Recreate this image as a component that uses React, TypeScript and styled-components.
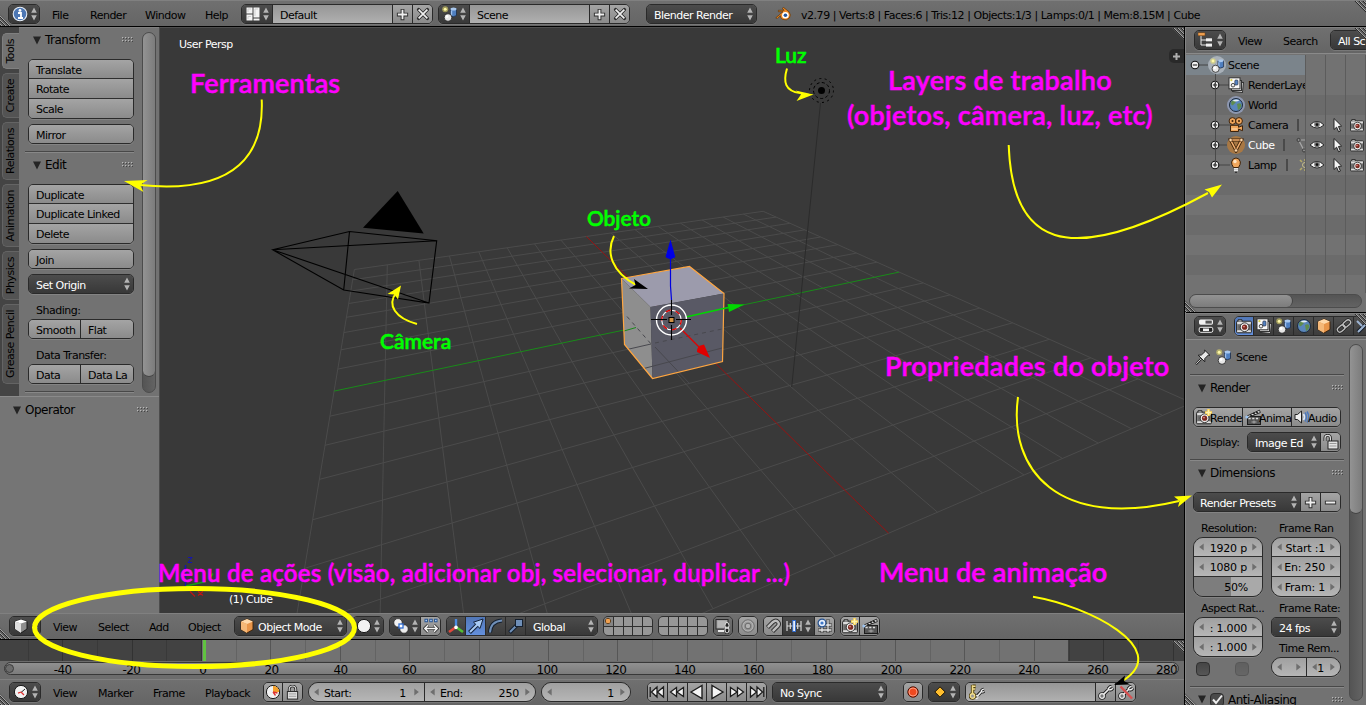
import React from "react";
import styled, { createGlobalStyle, css } from "styled-components";

const GlobalStyle = createGlobalStyle`
  * { box-sizing: border-box; }
  body { margin: 0; background: #393939; overflow: hidden; }
  #root { font-family: "DejaVu Sans", "Liberation Sans", sans-serif; font-size: 11px; color: #000; }
`;

/* ---------- shell ---------- */

const Window = styled.div`
  position: relative;
  width: 1366px;
  height: 705px;
  overflow: hidden;
  display: flex;
  flex-direction: column;
  background: #000;
  line-height: 14px;
  letter-spacing: -0.5px;
`;

const Bar = styled.div<{ $pad?: number; $top?: number }>`
  position: relative;
  flex: none;
  height: 26px;
  padding-left: ${(p) => p.$pad ?? 8}px;
  display: flex;
  align-items: flex-start;
  padding-top: ${(p) => p.$top ?? 3}px;
  overflow: hidden;
  background: linear-gradient(#707070, #656565);
  box-shadow: inset 0 1px #808080;
`;

const Body = styled.div`
  flex: 1;
  min-height: 0;
  display: flex;
  margin-top: 1px;
`;

const MainColumn = styled.div`
  width: 1184px;
  display: flex;
  flex-direction: column;
`;

const SideColumn = styled.div`
  flex: 1;
  margin-left: 1px;
  min-width: 0;
  display: flex;
  flex-direction: column;
  border-left: 1px solid #848484;
  background: #000;
`;

const Stage = styled.div`
  flex: none;
  height: 586px;
  display: flex;
`;

/* ---------- widgets ---------- */

type Tone = "dark" | "light" | "field" | "pill" | "blue" | "tab" | "mid";

const tones: Record<Tone, string> = {
  dark: "linear-gradient(#4c4c4c, #383838)",
  light: "linear-gradient(#a4a4a4, #8b8b8b)",
  field: "linear-gradient(#969696, #b0b0b0)",
  pill: "linear-gradient(#a0a0a0, #b6b6b6)",
  blue: "linear-gradient(#5177b8, #6490dc)",
  tab: "linear-gradient(#505050, #3c3c3c)",
  mid: "linear-gradient(#707070, #606060)",
};

const Group = styled.div<{ $w?: number; $r?: number; $ml?: number; $col?: boolean }>`
  flex: none;
  display: flex;
  flex-direction: ${(p) => (p.$col ? "column" : "row")};
  width: ${(p) => (p.$w ? `${p.$w}px` : "auto")};
  height: ${(p) => (p.$col ? "auto" : "20px")};
  margin-left: ${(p) => p.$ml ?? 0}px;
  border: 1px solid #2a2a2a;
  border-radius: ${(p) => p.$r ?? 5}px;
  overflow: hidden;
  box-shadow: 0 1px rgba(255, 255, 255, 0.12);
`;

const Cell = styled.div<{ $tone: Tone; $w?: number; $pl?: number; $h?: number; $top?: boolean; $center?: boolean }>`
  position: relative;
  display: flex;
  align-items: center;
  flex: ${(p) => (p.$w || p.$h ? "none" : "1")};
  width: ${(p) => (p.$w ? `${p.$w}px` : "auto")};
  height: ${(p) => (p.$h ? `${p.$h}px` : "auto")};
  min-width: 0;
  padding-top: 3px;
  padding-left: ${(p) => p.$pl ?? 0}px;
  justify-content: ${(p) => (p.$center ? "center" : "flex-start")};
  white-space: nowrap;
  overflow: hidden;
  color: ${(p) => (p.$tone === "dark" ? "#fff" : "#000")};
  background: ${(p) => tones[p.$tone]};
  svg {
    margin-top: -3px;
  }
  &:not(:first-child) {
    ${(p) => (p.$top ? css`border-top: 1px solid #2f2f2f;` : css`border-left: 1px solid #2a2a2a;`)}
  }
`;

const Push = styled.span`
  margin-left: auto;
  display: flex;
  align-items: center;
`;

const MenuItem = styled.span<{ $w: number }>`
  flex: none;
  width: ${(p) => p.$w}px;
  padding-top: 5px;
  white-space: nowrap;
`;

const Gap = styled.span<{ $w: number }>`
  flex: none;
  width: ${(p) => p.$w}px;
`;

const Status = styled.span`
  padding: 5px 0 0 10px;
  white-space: nowrap;
  letter-spacing: -0.46px;
`;

const Updown = ({ right = 3 }: { right?: number }) => (
  <Push>
    <svg width="6" height="14" viewBox="0 0 6 14" style={{ marginRight: right }}>
      <path d="M3 0.5 L5.8 5.8 H.2Z M3 13.5 L5.8 8.2 H.2Z" fill="#b4b4b4" />
    </svg>
  </Push>
);

const Arrow = ({ flip }: { flip?: boolean }) => (
  <svg width="5" height="8" viewBox="0 0 5 8" style={{ flex: "none" }}>
    <path d={flip ? "M.3 .5 L4.8 4 L.3 7.5Z" : "M4.7 .5 L.2 4 L4.7 7.5Z"} fill="#6e6e6e" />
  </svg>
);

/* ---------- icons ---------- */

const Svg = styled.svg<{ $ml?: number }>`
  flex: none;
  display: block;
  margin-left: ${(p) => p.$ml ?? 0}px;
`;

const sceneArt = (
  <>
    <path d="M8.5 3 V9.5 Q11 12 14.5 9.5 V3Z" fill="#4f7fc0" stroke="#1d2c45" strokeWidth=".8" />
    <ellipse cx="11.5" cy="3" rx="3" ry="1.5" fill="#a9c8ee" />
    <path d="M9.5 4.5v5" stroke="#9dc0ee" strokeWidth="1.4" />
    <circle cx="6" cy="11.5" r="3.8" fill="#e8e8e8" stroke="#222" strokeWidth=".8" />
    <circle cx="5" cy="10.5" r="1.4" fill="#fff" />
    <circle cx="3.2" cy="3.2" r="3" fill="#e9e06a" opacity=".55" />
    <circle cx="3.2" cy="3.2" r="1.5" fill="#fff9a8" />
  </>
);
const cameraArt = (
  <>
    <rect x=".6" y="3.2" width="14.8" height="11.6" rx="1" fill="#dcdcdc" stroke="#222" />
    <path d="M2 3.400V1.800h4v1.600" fill="#bbb" stroke="#222" />
    <rect x="1.2" y="6.2" width="13.6" height="6" fill="#6c6c6c" />
    <circle cx="8.6" cy="9.2" r="4.400" fill="#eee" stroke="#222" strokeWidth=".9" />
    <circle cx="8.6" cy="9.2" r="2.600" fill="#7a2a20" />
    <circle cx="8" cy="8.600" r=".9" fill="#e88" />
  </>
);
const clapArt = (
  <>
    <rect x="2.5" y="7.5" width="13" height="8" fill="#555" stroke="#1c1c1c" />
    <path d="M2 7 L14.5 1.2 L15.3 3.6 L3 8.5Z" fill="#e6e6e6" stroke="#1c1c1c" strokeWidth=".9" />
    <path d="M5 5.6l2 1.2M8 4.2l2 1.2M11 2.9l2 1.2" stroke="#1c1c1c" strokeWidth="1.4" />
    <path d="M3.5 9.5h11" stroke="#ddd" strokeWidth="1.6" strokeDasharray="2.2 1.5" />
    <path d="M6.5 13h5M9 11.5v3" stroke="#aaa" />
    <circle cx="1.8" cy="8" r="1.5" fill="#9cc3f0" />
  </>
);
const orangeCube = (
  <>
    <path d="M8 1 L14 3.5 V11.5 L8 15 L2 11.5 V3.5Z" fill="#e8954a" stroke="#3a2008" strokeWidth=".9" />
    <path d="M2 3.5 L8 6 L14 3.5 L8 1Z" fill="#ffd9ab" />
    <path d="M2 3.5 L8 6 V15 L2 11.5Z" fill="#f5b878" />
  </>
);
const keyArt = (
  <>
    <path d="M5 11L11 5" stroke="#222" strokeWidth="3.6" />
    <path d="M10 4.8L12 2.6L13.6 2.4M11.4 6.2L13.6 5.6L15 4" fill="none" stroke="#222" strokeWidth="3" />
    <circle cx="4" cy="12" r="2.3" fill="#777" stroke="#222" strokeWidth="3" />
    <path d="M5 11L11 5" stroke="#eee" strokeWidth="1.7" />
    <path d="M10 5L12 2.8L13.6 2.5M11.2 6L13.4 5.5L14.8 4.2" fill="none" stroke="#eee" strokeWidth="1.4" />
    <circle cx="4" cy="12" r="2.3" fill="#777" stroke="#eee" strokeWidth="1.3" />
  </>
);
const worldArt = (
  <>
    <circle cx="8" cy="8" r="6.5" fill="#5a86bb" stroke="#1c2a3c" />
    <path d="M3 5 Q6 2 8 3.5 Q8 6 6 7 Q5 9 3.5 8Z M9 7 Q13 5 13.5 8.5 Q12 12.5 10 13 Q9.5 10 9 7Z" fill="#5f8c4e" />
    <path d="M4.500 3.8 Q8 1.2 11.4 3.4 Q8 5.2 4.500 3.8Z" fill="#e6eef6" />
  </>
);
const layersArt = (
  <>
    <rect x="5" y="5" width="10" height="10" fill="#ccc" stroke="#333" transform="rotate(6 10 10)" />
    <rect x="3.5" y="3.5" width="10" height="10" fill="#ddd" stroke="#333" />
    <rect x="1" y=".8" width="11" height="11" fill="#fafafa" stroke="#333" />
    <circle cx="5" cy="8.2" r="1.8" fill="#eee" stroke="#222" strokeWidth=".8" />
    <rect x="6.8" y="3" width="3.2" height="5" rx="1" fill="#5585c4" stroke="#223" strokeWidth=".6" />
    <circle cx="3.4" cy="3.2" r="1.1" fill="#d8ce4c" />
  </>
);

const art: Record<string, React.ReactNode> = {
  scene: sceneArt,
  camera: cameraArt,
  clap: clapArt,
  cube: orangeCube,
  key: keyArt,
  world: worldArt,
  layers: layersArt,
  cameraNew: (
    <>
      {cameraArt}
      <path d="M12.5 0v7M9 3.5h7" stroke="#ffd24a" strokeWidth="2.6" />
      <path d="M12.5 .8v5.4M9.8 3.5h5.4" stroke="#fff4b0" strokeWidth="1.3" />
    </>
  ),
  info: (
    <>
      <circle cx="8" cy="8" r="6.8" fill="#4d77b4" stroke="#e6edf6" strokeWidth="1.1" />
      <circle cx="8" cy="4.4" r="1.4" fill="#fff" />
      <path d="M6 7h3v4.6M6 12h5" stroke="#fff" strokeWidth="1.8" fill="none" />
    </>
  ),
  layout: (
    <>
      <rect x="1.500" y="1.500" width="6" height="6" fill="#f4f4f4" />
      <rect x="1.500" y="8.500" width="6" height="6" fill="#f4f4f4" />
      <rect x="8.500" y="1.500" width="6" height="10" fill="#f4f4f4" />
      <rect x="8.500" y="12.500" width="6" height="2" fill="#f4f4f4" />
      <path d="M3 13v-2.500h3M3 6V3h3M10 10V3h3" stroke="#cfcfcf" fill="none" />
    </>
  ),
  plus: (
    <>
      <path d="M8 2v12M2 8h12" stroke="#2c2c2c" strokeWidth="4" />
      <path d="M8 3v10M3 8h10" stroke="#efefef" strokeWidth="2" />
    </>
  ),
  minus: (
    <>
      <path d="M2 8h12" stroke="#2c2c2c" strokeWidth="4" />
      <path d="M3 8h10" stroke="#efefef" strokeWidth="2" />
    </>
  ),
  cross: (
    <>
      <path d="M3 3l10 10M13 3L3 13" stroke="#2c2c2c" strokeWidth="4" strokeLinecap="round" />
      <path d="M3 3l10 10M13 3L3 13" stroke="#efefef" strokeWidth="2" />
    </>
  ),
  blender: (
    <>
      <path d="M.8 11.8 L8 5.7 H3.4 L3.4 4.3 H9.2 L7.2 2.4 L8.6 1.5 L14 5.8 Q16.6 9 14.4 12 Q11.5 15 7.8 13.4 Q5.2 12 5.2 9.6 L2.4 12.4Z" fill="#f08a24" stroke="#5a3208" strokeWidth=".7" />
      <circle cx="10.4" cy="9.2" r="3.3" fill="#fff" />
      <circle cx="10.4" cy="9.2" r="1.8" fill="#23569c" />
    </>
  ),
  tree: (
    <>
      <path d="M3 3.5V13h5M3 8h5" stroke="#e9e9e9" fill="none" />
      <rect x="0" y=".8" width="7" height="3" fill="#f0a050" stroke="#6b3c10" strokeWidth=".5" />
      <rect x="8" y="6.3" width="6" height="3" fill="#eee" />
      <rect x="8" y="11.6" width="6" height="3" fill="#eee" />
    </>
  ),
  props: (
    <>
      <rect x="1" y="1.5" width="14" height="5.2" rx="1.6" fill="#f1f1f1" />
      <rect x="7.5" y="2.6" width="6.3" height="3" fill="#555" />
      <rect x="1.2" y="9.3" width="13.6" height="5" rx="1.6" fill="#222" stroke="#f1f1f1" />
      <rect x="5" y="10.5" width="6" height="2.6" fill="#f1f1f1" />
    </>
  ),
  whiteCube: (
    <>
      <path d="M8 1.5 L14 3.5 V11 L8 15 L2 11 V3.5Z" fill="#8e8e8e" stroke="#151515" strokeWidth=".9" />
      <path d="M2 3.5 L8 5.6 L14 3.5 L8 1.5Z" fill="#fff" />
      <path d="M2 3.5 L8 5.6 V15 L2 11Z" fill="#dedede" />
    </>
  ),
  ball: <circle cx="8" cy="8" r="6.6" fill="#f2f2f2" stroke="#1b1b1b" />,
  pivot: (
    <>
      <circle cx="5" cy="4.800" r="4.200" fill="#f2f2f2" stroke="#222" strokeWidth=".7" />
      <circle cx="11" cy="11" r="4.200" fill="#ececec" stroke="#222" strokeWidth=".7" />
      <rect x="6" y="6" width="4" height="4" fill="#fff" stroke="#2f6bd0" strokeWidth="1.3" />
    </>
  ),
  centers: (
    <>
      <path d="M1.5 2.500h3.400M6.300 2.500h3.400M11.100 2.500h3.400" stroke="#24508e" strokeWidth="3.4" />
      <path d="M2.4 2.500h1.6M7.2 2.500h1.6M12 2.500h1.6" stroke="#a9ccf8" strokeWidth="1.6" />
      <path d="M1.500 10.500h13M5 7L1.5 10.500l3.5 3.500M11 7l3.500 3.500-3.500 3.500" stroke="#333" strokeWidth="2.8" fill="none" />
      <path d="M2 10.500h12M5 7.300L1.800 10.500l3.2 3.200M11 7.300l3.200 3.200-3.2 3.200" stroke="#f6f6f6" strokeWidth="1.4" fill="none" />
    </>
  ),
  axes: (
    <>
      <path d="M8 9V1" stroke="#4c8be0" strokeWidth="2.4" />
      <path d="M8 9L1 14" stroke="#e0483c" strokeWidth="2.6" />
      <path d="M8 9l7 5" stroke="#54c034" strokeWidth="2.6" />
      <circle cx="8" cy="9.4" r="1.8" fill="#fff" />
    </>
  ),
  move: (
    <>
      <path d="M1.5 14.5L10 6" stroke="#14233c" strokeWidth="4" />
      <path d="M15 1L5.5 4.2 L12 10.5Z" fill="#a9cbf5" stroke="#14233c" />
      <path d="M2 14L10.5 5.5" stroke="#a9cbf5" strokeWidth="2" />
    </>
  ),
  rotate: (
    <>
      <path d="M2 14.5Q2.5 3.5 14 2.5" stroke="#15202f" strokeWidth="4" fill="none" />
      <path d="M2 14.5Q2.5 3.5 14 2.5" stroke="#6f8fb8" strokeWidth="2" fill="none" />
    </>
  ),
  scale: (
    <>
      <path d="M1.5 14.5L9 7" stroke="#15202f" strokeWidth="4" />
      <path d="M2 14L9 7" stroke="#6f8fb8" strokeWidth="2" />
      <rect x="7.5" y="1.5" width="7" height="7" fill="#6f8fb8" stroke="#15202f" />
    </>
  ),
  lockCam: (
    <>
      <rect x="1" y="1.5" width="12" height="9.5" fill="#a4a4a4" stroke="#2a2a2a" />
      <rect x="2.6" y="3" width="9" height="6.5" fill="#b6b6b6" />
      <path d="M3 13h6" stroke="#e8e8e8" strokeWidth="2" />
      <path d="M12 7v7" stroke="#222" strokeWidth="4.4" strokeLinecap="round" />
      <ellipse cx="12" cy="7.5" rx="2" ry="3" fill="none" stroke="#eee" />
      <ellipse cx="12" cy="12" rx="2" ry="3" fill="none" stroke="#eee" />
    </>
  ),
  prop: (
    <>
      <circle cx="8" cy="8" r="6.2" fill="none" stroke="#6a6a6a" />
      <circle cx="8" cy="8" r="5" fill="none" stroke="#b8b8b8" />
      <circle cx="8" cy="8" r="2.8" fill="#b2b2b2" stroke="#6a6a6a" />
    </>
  ),
  magnet: (
    <>
      <path d="M2.5 9.5 L8 4 Q11 1.5 13 4 Q15 6.5 12 9 L7.5 13.5" stroke="#333" strokeWidth="4.4" fill="none" />
      <path d="M2.8 9.2 L8 4 Q11 1.5 13 4 Q15 6.5 12 9 L7.8 13.2" stroke="#bdbdbd" strokeWidth="2.4" fill="none" />
    </>
  ),
  snapEl: (
    <>
      <path d="M1 3v10M4.3 5v6M11.7 5v6M15 3v10M1 8h14" stroke="#d8d8d8" strokeWidth="1.2" />
      <rect x="6.8" y="2.5" width="2.6" height="11" fill="#fff" stroke="#2f6bd0" />
    </>
  ),
  snapGrid: (
    <>
      <path d="M5 1v14M11 1v14M1 7h14M1 12h14" stroke="#333" strokeWidth="2.8" />
      <path d="M5 1.500v13M11 1.500v13M1.500 7h13M1.500 12h13" stroke="#eaeaea" strokeWidth="1.3" />
      <circle cx="5" cy="5" r="3.9" fill="#e6eefb" stroke="#24508e" strokeWidth="1.2" />
      <circle cx="5" cy="5" r="1.6" fill="#3f78c8" />
    </>
  ),
  clock: (
    <>
      <circle cx="8" cy="8" r="6.6" fill="#f2f2f2" stroke="#1b1b1b" />
      <path d="M8 8.5L12 5" stroke="#222" />
      <path d="M8 8l-3 1.2M8 8l3 3" stroke="#d33" strokeWidth="1.3" />
    </>
  ),
  clockKey: (
    <>
      <circle cx="8" cy="8" r="6.6" fill="#f2f2f2" stroke="#1b1b1b" />
      <path d="M8 8V1.8A6.2 6.2 0 0 1 14.2 8Z" fill="#f4a12c" />
      <path d="M8 8l4.5 1M8 8l2.5 3.5" stroke="#d33" strokeWidth="1.3" />
    </>
  ),
  lock: (
    <>
      <path d="M4.5 7V4.5a3.5 3.5 0 0 1 7 0V7" stroke="#222" strokeWidth="3" fill="none" />
      <path d="M4.5 7V4.5a3.5 3.5 0 0 1 7 0V7" stroke="#ddd" strokeWidth="1.2" fill="none" />
      <rect x="2.5" y="7" width="11" height="8" fill="#e2e2e2" stroke="#222" />
      <path d="M4 9.5h8M4 12h8" stroke="#999" />
    </>
  ),
  unlock: (
    <>
      <path d="M2 7V4a2.6 2.6 0 0 1 5.4 0V7" stroke="#222" strokeWidth="3" fill="none" />
      <path d="M2 7V4a2.6 2.6 0 0 1 5.4 0V7" stroke="#ddd" strokeWidth="1.2" fill="none" />
      <rect x="5" y="7" width="10" height="8" fill="#e2e2e2" stroke="#222" />
      <path d="M6.5 9.5h7M6.5 12h7" stroke="#999" />
    </>
  ),
  first: <path d="M1.2 3v10M2.5 8L8 3v10ZM8.5 8L14.5 3v10Z" fill="#f4f4f4" stroke="#1e1e1e" strokeWidth="1.3" />,
  prev: <path d="M1.5 8L7.5 3.5v9ZM8 8L14.5 3.5v9Z" fill="#f4f4f4" stroke="#1e1e1e" strokeWidth="1.3" />,
  back: <path d="M2 8L13 1.5v13Z" fill="#f4f4f4" stroke="#1e1e1e" strokeWidth="1.4" />,
  play: <path d="M14 8L3 1.5v13Z" fill="#f4f4f4" stroke="#1e1e1e" strokeWidth="1.4" />,
  next: <path d="M14.5 8L8.5 3.5v9ZM8 8L1.5 3.5v9Z" fill="#f4f4f4" stroke="#1e1e1e" strokeWidth="1.3" />,
  last: <path d="M14.8 3v10M13.5 8L8 3v10ZM7.5 8L1.5 3v10Z" fill="#f4f4f4" stroke="#1e1e1e" strokeWidth="1.3" />,
  record: (
    <>
      <circle cx="8" cy="8" r="5.2" fill="#f04a20" stroke="#4a1206" />
      <circle cx="8" cy="8" r="4" fill="none" stroke="#ffb09a" strokeWidth=".8" />
    </>
  ),
  diamond: <path d="M8 2.8L13.2 8L8 13.2L2.8 8Z" fill="#ffbe2e" stroke="#1a1204" />,
  keying: (
    <>
      <path d="M7 13L13 7" stroke="#222" strokeWidth="3.4" />
      <path d="M12 7L13.500 5.500L15 5.200M13 8.500L15.500 7.500" fill="none" stroke="#222" strokeWidth="2.8" />
      <path d="M8 12.500L13 7" stroke="#eee" strokeWidth="1.6" />
      <path d="M12 7L13.500 5.500L15 5.200M13 8.300L15.200 7.500" fill="none" stroke="#eee" strokeWidth="1.2" />
      <circle cx="7.500" cy="13" r="1.6" fill="#777" stroke="#eee" strokeWidth="1.1" />
      <path d="M3.500 1v9M3.500 2.200h3.200M3.500 5h2.800" stroke="#4c3c08" strokeWidth="3.2" />
      <circle cx="3.500" cy="12" r="2.2" fill="#999" stroke="#4c3c08" strokeWidth="3" />
      <path d="M3.500 1.200v9M3.500 2.200h3M3.500 5h2.600" stroke="#f0dc8c" strokeWidth="1.6" />
      <circle cx="3.500" cy="12" r="2.2" fill="#999" stroke="#f0dc8c" strokeWidth="1.4" />
    </>
  ),
  keyOff: (
    <>
      {keyArt}
      <path d="M2.5 2.5L14 14.5" stroke="#d85050" strokeWidth="2.4" />
    </>
  ),
  link: (
    <g transform="rotate(-42 8 8)" fill="none">
      <rect x="0" y="5.500" width="8.500" height="5" rx="2.500" stroke="#222" strokeWidth="2.800" />
      <rect x="7.500" y="5.500" width="8.500" height="5" rx="2.500" stroke="#222" strokeWidth="2.800" />
      <rect x="0" y="5.500" width="8.500" height="5" rx="2.500" stroke="#bdbdbd" strokeWidth="1.400" />
      <rect x="7.500" y="5.500" width="8.500" height="5" rx="2.500" stroke="#bdbdbd" strokeWidth="1.400" />
    </g>
  ),
  wrench: (
    <>
      <path d="M2 14L12 4" stroke="#141c28" strokeWidth="4" />
      <path d="M2 14L12 4M1 3l5 5" stroke="#9db4d2" strokeWidth="2" />
    </>
  ),
  pin: (
    <>
      <path d="M1 15.2L6 10" stroke="#222" strokeWidth="2" />
      <path d="M3.2 6.2L6.4 6 L10 2.6 L9.6 1 L15 6.4 L13.4 6 L9.8 9.6 L9.8 12.8Z" fill="#e8e8e8" stroke="#222" />
      <path d="M1.2 14.8L6 10" stroke="#ddd" strokeWidth=".9" />
    </>
  ),
  speaker: (
    <>
      <path d="M1 5.500h2.500L7.500 2v12L3.500 10.500H1Z" fill="#eee" stroke="#222" />
      <path d="M9.500 5q2 3 0 6" stroke="#dce8fa" strokeWidth="1.600" fill="none" />
      <path d="M11 3.500q3 4.500 0 9M13 2.500q3.600 5.500 0 11" stroke="#4a78c0" strokeWidth="1.400" fill="none" />
    </>
  ),
  movie: (
    <>
      <circle cx="4.5" cy="4" r="3.4" fill="#f0a65c" stroke="#3d220a" />
      <circle cx="11" cy="4" r="3.4" fill="#f0a65c" stroke="#3d220a" />
      <path d="M2.5 8.3h8v2l4-1.6v5l-4-1.6v2.4h-8Z" fill="#f0a65c" stroke="#3d220a" />
      <circle cx="4.5" cy="4" r="1" fill="#3d220a" />
      <circle cx="11" cy="4" r="1" fill="#3d220a" />
      <path d="M3.5 12h6" stroke="#ffe0b8" />
    </>
  ),
  mesh: (
    <>
      <path d="M2.6 3h10.8L8 13.4Z" fill="none" stroke="#3d220a" strokeWidth="3.2" />
      <path d="M2.6 3h10.8L8 13.4Z" fill="none" stroke="#f5b070" strokeWidth="1.5" />
      <circle cx="2.6" cy="3" r="1.7" fill="#ffd9ab" stroke="#3d220a" strokeWidth=".6" />
      <circle cx="13.4" cy="3" r="1.7" fill="#ffd9ab" stroke="#3d220a" strokeWidth=".6" />
      <circle cx="8" cy="13.4" r="1.7" fill="#ffd9ab" stroke="#3d220a" strokeWidth=".6" />
    </>
  ),
  meshData: (
    <>
      <path d="M2.6 3h10.8L8 13.4Z" fill="none" stroke="#a8a8a8" strokeWidth="1.2" />
      <circle cx="2.6" cy="3" r="1.6" fill="#8a8a8a" stroke="#3c3c3c" />
      <circle cx="8" cy="13.4" r="1.6" fill="#8a8a8a" stroke="#3c3c3c" />
    </>
  ),
  lampData: (
    <>
      <circle cx="8" cy="8" r="2.5" fill="none" stroke="#c8bf88" />
      <path d="M3 3l2 2M3 13l2-2M8 2v2M8 14v-2" stroke="#b5ab68" strokeWidth="1.6" />
    </>
  ),
  lamp: (
    <>
      <path d="M5.5 10.5Q3.4 7.5 3.6 5 Q4.5 1 8 1 Q11.5 1 12.4 5 Q12.6 7.5 10.5 10.5Z" fill="#f0a65c" stroke="#3d220a" />
      <circle cx="7" cy="4.5" r="1.7" fill="#ffe6c6" />
      <path d="M6 11.8h4M6 13.6h4" stroke="#e6e6e6" strokeWidth="1.5" />
      <path d="M7 15.3h2" stroke="#333" strokeWidth="1.2" />
    </>
  ),
  eye: (
    <>
      <path d="M1 8Q8 .8 15 8Q8 14 1 8Z" fill="#f4f4f4" stroke="#2c2c2c" />
      <circle cx="8" cy="7.600" r="2.800" fill="#777" />
      <circle cx="8" cy="7.600" r="1.300" fill="#111" />
    </>
  ),
  cursor: <path d="M5 1.5V12.5L7.6 10.2L9.6 14.8L11.4 14L9.5 9.5L12.6 9Z" fill="#f4f4f4" stroke="#222" />,
};

const Icon = ({ n, s = 16, ml }: { n: string; s?: number; ml?: number }) => (
  <Svg $ml={ml} width={s} height={s} viewBox="0 0 16 16">
    {art[n]}
  </Svg>
);

const Grip = styled.span<{ $x: number; $y: number; $top?: boolean }>`
  position: absolute;
  z-index: 3;
  left: ${(p) => p.$x}px;
  top: ${(p) => p.$y}px;
  width: 12px;
  height: 12px;
  clip-path: ${(p) => (p.$top ? "polygon(0 0, 100% 0, 100% 100%)" : "polygon(0 0, 100% 100%, 0 100%)")};
  background: repeating-linear-gradient(45deg, #2a2a2a 0 1.2px, #a0a0a0 1.2px 2.1px, #606060 2.1px 2.83px);
`;

const EditorButton = ({ n }: { n: string }) => (
  <Group $w={32}>
    <Cell $tone="dark" $pl={3}>
      <Icon n={n} />
      <Updown right={2} />
    </Cell>
  </Group>
);

/* ---------- tool shelf ---------- */

const Shelf = styled.div`
  width: 160px;
  display: flex;
  flex-direction: column;
  background: #727272;
  border-right: 1px solid #4c4c4c;
  box-shadow: inset 0 1px #808080;
`;

const ShelfTop = styled.div`
  height: 369px;
  display: flex;
`;

const TabStrip = styled.div`
  width: 19px;
  padding: 6px 0 0 2px;
  display: flex;
  flex-direction: column;
  gap: 4px;
  background: #444;
`;

const Tab = styled.div<{ $h: number; $on?: boolean }>`
  flex: none;
  height: ${(p) => p.$h}px;
  border-radius: 5px 0 0 5px;
  border: 1px solid ${(p) => (p.$on ? "#808080" : "#646464")};
  border-right: 0;
  background: ${(p) => (p.$on ? "#727272" : "#535353")};
  display: flex;
  align-items: center;
  justify-content: center;
  span {
    writing-mode: vertical-rl;
    transform: rotate(180deg);
    white-space: nowrap;
    line-height: 16px;
  }
`;

const ShelfBody = styled.div`
  width: 119px;
  padding: 4px 4px 0 6px;
`;

const PanelTitle = styled.div<{ $pl?: number; $h?: number }>`
  display: flex;
  align-items: center;
  height: ${(p) => p.$h ?? 18}px;
  padding-left: ${(p) => p.$pl ?? 8}px;
  font-size: 12px;
  gap: 4px;
  white-space: nowrap;
`;

const Rule = styled.div<{ $mt?: number }>`
  height: 2px;
  margin-top: ${(p) => p.$mt ?? 6}px;
  border-top: 1px solid #484848;
  border-bottom: 1px solid #888;
`;

const Caption = styled.div<{ $mt?: number; $w?: number }>`
  height: 15px;
  line-height: 16px;
  width: ${(p) => (p.$w ? `${p.$w}px` : "auto")};
  margin-top: ${(p) => p.$mt ?? 0}px;
  padding-left: 8px;
  white-space: nowrap;
`;

const Stack = styled.div<{ $mt?: number; $pl?: number }>`
  margin-top: ${(p) => p.$mt ?? 0}px;
  padding-left: ${(p) => p.$pl ?? 3}px;
`;

const Triangle = () => (
  <svg width="8" height="9" viewBox="0 0 8 9">
    <path d="M0 .5H8L4 8.500Z" fill="#242424" />
  </svg>
);

const Dots = () => (
  <Push>
    <svg width="12" height="6" viewBox="0 0 12 6">
      {[0, 3, 6, 9].map((x) =>
        [0, 3].map((y) => (
          <g key={`${x}-${y}`}>
            <rect x={x} y={y} width="1.2" height="1.2" fill="#b8b8b8" />
            <rect x={x + 1} y={y + 1} width="1" height="1" fill="#444" />
          </g>
        ))
      )}
    </svg>
  </Push>
);

const VScroll = styled.div<{ $h: number; $thumb: number }>`
  flex: none;
  width: 14px;
  height: ${(p) => p.$h}px;
  border-radius: 7px;
  border: 1px solid #4c4c4c;
  background: linear-gradient(90deg, #545454, #636363);
  &::before {
    content: "";
    display: block;
    height: ${(p) => p.$thumb}px;
    border-radius: 6px;
    border-bottom: 1px solid #454545;
    background: linear-gradient(90deg, #939393, #7c7c7c);
  }
`;

const ButtonStack = ({ items }: { items: string[] }) => (
  <Group $w={106} $col>
    {items.map((t, i) => (
      <Cell key={t} $tone="light" $top $pl={7} $h={i ? 20 : 18}>
        {t}
      </Cell>
    ))}
  </Group>
);

const OperatorPanel = styled.div`
  flex: 1;
  padding-right: 10px;
  border-top: 1px solid #8a8a8a;
  background: #757575;
`;

const ToolShelf = () => (
  <Shelf>
    <ShelfTop>
      <TabStrip>
        <Tab $h={36} $on><span>Tools</span></Tab>
        <Tab $h={45}><span>Create</span></Tab>
        <Tab $h={58}><span>Relations</span></Tab>
        <Tab $h={63}><span>Animation</span></Tab>
        <Tab $h={49}><span>Physics</span></Tab>
        <Tab $h={80}><span>Grease Pencil</span></Tab>
      </TabStrip>
      <ShelfBody>
        <PanelTitle><Triangle />Transform<Dots /></PanelTitle>
        <Stack $mt={10}><ButtonStack items={["Translate", "Rotate", "Scale"]} /></Stack>
        <Stack $mt={5}><ButtonStack items={["Mirror"]} /></Stack>
        <Rule $mt={7} />
        <PanelTitle $h={24}><Triangle />Edit<Dots /></PanelTitle>
        <Stack $mt={7}><ButtonStack items={["Duplicate", "Duplicate Linked", "Delete"]} /></Stack>
        <Stack $mt={5}><ButtonStack items={["Join"]} /></Stack>
        <Stack $mt={5}>
          <Group $w={106}>
            <Cell $tone="dark" $pl={7}>Set Origin<Updown /></Cell>
          </Group>
        </Stack>
        <Stack><Caption $mt={9}>Shading:</Caption></Stack>
        <Stack $mt={1}>
          <Group $w={106}>
            <Cell $tone="light" $w={51} $pl={7}>Smooth</Cell>
            <Cell $tone="light" $pl={7}>Flat</Cell>
          </Group>
        </Stack>
        <Stack><Caption $mt={9}>Data Transfer:</Caption></Stack>
        <Stack $mt={1}>
          <Group $w={106}>
            <Cell $tone="light" $w={51} $pl={7}>Data</Cell>
            <Cell $tone="light" $pl={7}>Data La</Cell>
          </Group>
        </Stack>
        <Rule $mt={7} />
      </ShelfBody>
      <Stack $mt={5} $pl={4}><VScroll $h={361} $thumb={343} /></Stack>
    </ShelfTop>
    <OperatorPanel>
      <PanelTitle $h={26} $pl={13}><Triangle />Operator<Dots /></PanelTitle>
    </OperatorPanel>
  </Shelf>
);

/* ---------- 3D viewport ---------- */

const Viewport = styled.div`
  position: relative;
  flex: 1;
  background: #393939;
  box-shadow: inset 0 1px #4e4e4e;
  color: #fff;
`;

const Canvas = styled.svg`
  position: absolute;
  inset: 0;
`;

const ViewLabel = styled.span<{ $x: number; $y: number }>`
  position: absolute;
  left: ${(p) => p.$x}px;
  top: ${(p) => p.$y}px;
`;

const RegionToggle = styled.span`
  position: absolute;
  right: 0;
  top: 22px;
  width: 15px;
  height: 14px;
  border-radius: 5px 0 0 5px;
  background: #292929;
  display: flex;
  align-items: center;
  justify-content: center;
`;

const project = (u: number, v: number) => {
  const w = 1 - 0.437 * u + 0.1945 * v;
  return [(671.5 - 171.2 * u + 402.4 * v) / w, (320 - 19.8 * u + 5 * v) / w];
};

const seg = (a: number[], b: number[]) =>
  `M${a[0].toFixed(1)} ${a[1].toFixed(1)}L${b[0].toFixed(1)} ${b[1].toFixed(1)}`;

const steps = Array.from({ length: 17 }, (_, i) => (i - 8) / 8).filter((t) => t !== 0);
const floor = steps
  .map((t) => seg(project(t, -1), project(t, 1)) + seg(project(-1, t), project(1, t)))
  .join("");

const Scene3D = () => (
  <Canvas width="1024" height="586" viewBox="160 27 1024 586" fill="none">
    <path d={floor} stroke="#4b4b4b" strokeWidth="1" />
    <path d={seg(project(0, -1), project(0, 1))} stroke="#198a19" />
    <path d={seg(project(-1, 0), project(1, 0))} stroke="#981212" />
    <path d="M820.5 103L791.7 387" stroke="#2b2b2b" />
    <g stroke="#000" strokeDasharray="3 2.4">
      <circle cx="821.5" cy="90.5" r="8" />
      <circle cx="821.5" cy="90.5" r="12" strokeDasharray="2 3.4" />
    </g>
    <circle cx="821.5" cy="90.5" r="3.5" fill="#000" />

    <path d="M397.7 191L363 227.7L423.7 233.5Z" fill="#000" />
    <path
      d="M272.5 249.7L349.5 231.5L436.7 240.7L429 303L343.7 290ZM349.5 231.5L343.7 290M272.5 249.7L436.7 240.7M272.5 249.7L429 303"
      stroke="#000"
      strokeWidth="1.1"
    />

    <path d="M621.5 278.5L689.5 266.5L724 293.5L650.5 307Z" fill="#9c9bac" />
    <path d="M621.5 278.5L650.5 307L652.5 378.5L624.5 344.5Z" fill="#8e8e8e" />
    <path d="M650.5 307L724 293.5L722.5 361.5L652.5 378.5Z" fill="#595965" />
    <path d="M627 349.500L651 344M642 369L722 348M655 347L690 384" stroke="#48484e" />
    <path d="M627 316.500L652 345M655 343L722 329" stroke="#48484e" strokeDasharray="4 4" />
    <path d="M624 331L636 327.500" stroke="#198a19" />
    <path d="M621.5 278.5L689.5 266.5L724 293.5L722.5 361.5L652.5 378.5L624.5 344.5Z" stroke="#ffa640" strokeWidth="1.2" />

    <path d="M670.5 258V286L671.5 300" stroke="#0000e0" strokeWidth="1.2" />
    <path d="M670.5 239.5L675.3 257Q670.5 261 665.5 257Z" fill="#0000e6" />
    <path d="M686 317L728 307.5" stroke="#00d800" strokeWidth="1.3" />
    <path d="M744.5 304.5L727.5 304L729 312Z" fill="#00d800" />
    <path d="M680 328L700 348" stroke="#e00000" strokeWidth="1.2" />
    <path d="M710 358L697 352Q696 346 704 344.5Z" fill="#e00000" />
    <circle cx="671.5" cy="320" r="15" stroke="#fff" strokeWidth="1.4" />
    <circle cx="671.5" cy="320" r="9.8" stroke="#fff" strokeWidth="1.1" />
    <circle cx="671.5" cy="320" r="9.8" stroke="#e00000" strokeWidth="1.3" strokeDasharray="5 5" />
    <path d="M651 319.5H667M676 319.5H691M671.5 300V315M671.5 325V340" stroke="#000" strokeWidth="1.1" />
    <rect x="669" y="317.5" width="5" height="5" fill="#d29245" stroke="#000" />

    <path d="M185.5 565V586" stroke="#1414b4" strokeWidth="1.4" />
    <path d="M186 586L206 581.5M209 573.5l2 3l2-3M211 576.5l-1.500 3" stroke="#12a012" strokeWidth="1.4" />
    <path d="M190 591.500L195 596.500M198 591.500l5 4M203 591.500l-5 4" stroke="#c01414" strokeWidth="1.1" />
    <path d="M188 557.500h4l-4 5h4" stroke="#1414b4" />
  </Canvas>
);

/* ---------- headers ---------- */

const Layers = styled.div<{ $ml: number }>`
  flex: none;
  width: 50px;
  height: 20px;
  margin-left: ${(p) => p.$ml}px;
  display: grid;
  grid-template-columns: repeat(5, 1fr);
  grid-template-rows: repeat(2, 1fr);
  gap: 1px;
  border: 1px solid #2f2f2f;
  border-radius: 5px;
  overflow: hidden;
  background: #2f2f2f;
`;

const LayerCell = styled.span<{ $on?: boolean }>`
  background: ${(p) =>
    p.$on ? "radial-gradient(circle at 4px 4px, #f0a050 0 2px, #5c3a14 2.6px, #858585 3.2px)" : "#979797"};
`;

const LayerBlock = ({ ml, active }: { ml: number; active?: boolean }) => (
  <Layers $ml={ml}>
    {Array.from({ length: 10 }, (_, i) => (
      <LayerCell key={i} $on={active && i === 0} />
    ))}
  </Layers>
);

const ViewHeader = () => (
  <Bar $pad={9}>
    <EditorButton n="whiteCube" />
    <Gap $w={12} />
    <MenuItem $w={45}>View</MenuItem>
    <MenuItem $w={51}>Select</MenuItem>
    <MenuItem $w={39}>Add</MenuItem>
    <MenuItem $w={46}>Object</MenuItem>
    <Group $w={113}>
      <Cell $tone="dark" $pl={4}><Icon n="cube" /><Gap $w={3} />Object Mode<Updown /></Cell>
    </Group>
    <Group $w={32} $ml={5}>
      <Cell $tone="dark" $pl={3}><Icon n="ball" /><Updown /></Cell>
    </Group>
    <Group $w={52} $ml={5}>
      <Cell $tone="dark" $w={30} $pl={3}><Icon n="pivot" /><Updown right={2} /></Cell>
      <Cell $tone="light" $center><Icon n="centers" /></Cell>
    </Group>
    <Group $w={152} $ml={5}>
      <Cell $tone="tab" $w={18} $center><Icon n="axes" /></Cell>
      <Cell $tone="blue" $w={20} $center><Icon n="move" /></Cell>
      <Cell $tone="tab" $w={20} $center><Icon n="rotate" /></Cell>
      <Cell $tone="tab" $w={20} $center><Icon n="scale" /></Cell>
      <Cell $tone="dark" $pl={7}>Global<Updown /></Cell>
    </Group>
    <LayerBlock ml={5} active />
    <LayerBlock ml={5} />
    <Group $w={20} $ml={5}><Cell $tone="mid" $center><Icon n="lockCam" /></Cell></Group>
    <Group $w={20} $ml={5}><Cell $tone="light" $center><Icon n="prop" /></Cell></Group>
    <Group $w={72} $ml={5}>
      <Cell $tone="light" $w={18} $center><Icon n="magnet" /></Cell>
      <Cell $tone="dark" $w={32} $pl={3}><Icon n="snapEl" /><Updown /></Cell>
      <Cell $tone="light" $center><Icon n="snapGrid" /></Cell>
    </Group>
    <Group $w={40} $ml={5}>
      <Cell $tone="light" $w={18} $center><Icon n="cameraNew" /></Cell>
      <Cell $tone="light" $center><Icon n="clap" /></Cell>
    </Group>
  </Bar>
);

const NumberText = styled.span<{ $mr?: number }>`
  margin-left: auto;
  margin-right: ${(p) => p.$mr ?? 8}px;
  letter-spacing: -0.2px;
`;

const TimelineHeader = () => (
  <Bar $pad={9}>
    <EditorButton n="clock" />
    <Gap $w={12} />
    <MenuItem $w={45}>View</MenuItem>
    <MenuItem $w={55}>Marker</MenuItem>
    <MenuItem $w={52}>Frame</MenuItem>
    <MenuItem $w={58}>Playback</MenuItem>
    <Group $w={40}>
      <Cell $tone="light" $w={18} $center><Icon n="clockKey" /></Cell>
      <Cell $tone="light" $center><Icon n="lock" s={15} /></Cell>
    </Group>
    <Group $w={228} $ml={5} $r={10}>
      <Cell $tone="pill" $w={115} $pl={5}>
        <Arrow /><Gap $w={5} />Start:<NumberText>1</NumberText><Arrow flip /><Gap $w={5} />
      </Cell>
      <Cell $tone="pill" $pl={5}>
        <Arrow /><Gap $w={5} />End:<NumberText $mr={6}>250</NumberText><Arrow flip /><Gap $w={5} />
      </Cell>
    </Group>
    <Group $w={90} $ml={5} $r={10}>
      <Cell $tone="pill" $pl={5}>
        <Arrow /><NumberText $mr={6}>1</NumberText><Arrow flip /><Gap $w={5} />
      </Cell>
    </Group>
    <Group $w={120} $ml={16}>
      {["first", "prev", "back", "play", "next", "last"].map((n) => (
        <Cell key={n} $tone="light" $center><Icon n={n} /></Cell>
      ))}
    </Group>
    <Group $w={115} $ml={5}>
      <Cell $tone="dark" $pl={7}>No Sync<Updown right={2} /></Cell>
    </Group>
    <Group $w={20} $ml={16}><Cell $tone="light" $center><Icon n="record" /></Cell></Group>
    <Group $w={32} $ml={5}><Cell $tone="dark" $pl={3}><Icon n="diamond" /><Updown /></Cell></Group>
    <Group $w={171} $ml={5}>
      <Cell $tone="field" $w={129} $pl={3}><Icon n="keying" /></Cell>
      <Cell $tone="light" $w={20} $center><Icon n="key" /></Cell>
      <Cell $tone="light" $center><Icon n="keyOff" /></Cell>
    </Group>
  </Bar>
);

/* ---------- timeline ---------- */

const Timeline = styled.div`
  position: relative;
  flex: none;
  margin-top: 1px;
  height: 39px;
  background: #6c6c6c;
`;

const frameX = (f: number) => 201 + f * 3.47;
const labelX = (f: number) => 202.8 + f * 3.442 - (f < 0 ? 2.5 : 0);

const Ruler = styled.div`
  margin: 1px 5px 0 4px;
  height: 13px;
  border: 1px solid #383838;
  border-radius: 7px;
  background: linear-gradient(#909090, #7c7c7c);
`;

const Tick = styled.span`
  position: absolute;
  top: 22.500px;
  transform: translateX(-50%);
  font-size: 12px;
  letter-spacing: -0.6px;
`;

const majors = Array.from({ length: 17 }, (_, i) => (i - 2) * 20);
const minors = Array.from({ length: 34 }, (_, i) => (i - 5) * 10);

const TimelineArea = () => (
  <Timeline>
    <svg width="1184" height="21" viewBox="0 0 1184 21" style={{ display: "block" }}>
      <rect width="1184" height="21" fill="#727272" />
      <rect width="202" height="21" fill="#424242" />
      <rect x="1068" width="116" height="21" fill="#424242" />
      {minors.map((f) => (
        <rect key={f} x={Math.round(frameX(f))} width="1" height="21" fill="#000" opacity={f % 20 ? 0.13 : 0.24} />
      ))}
      <rect x="203" width="3" height="21" fill="#60c340" />
    </svg>
    <Ruler />
    {majors.filter((f) => f <= 280).map((f) => (
      <Tick key={f} style={{ left: labelX(f) }}>{f}</Tick>
    ))}
    <svg width="1184" height="13" viewBox="0 0 1184 13" style={{ position: "absolute", left: 0, top: 22 }}>
      <circle cx="9.500" cy="6.500" r="4" fill="#6c6c6c" stroke="#3c3c3c" />
      <path d="M1174 2a5 5 0 0 1 0 9" fill="none" stroke="#3c3c3c" />
    </svg>
    <Grip $x={1172} $y={1} $top />
  </Timeline>
);

/* ---------- outliner ---------- */

const Outliner = styled.div`
  position: relative;
  flex: none;
  height: 259px;
  padding-top: 1px;
  background: #727272;
  display: flex;
  flex-direction: column;
  border-top: 1px solid #8a8a8a;
`;

const Row = styled.div<{ $i: number; $sel?: boolean }>`
  flex: none;
  height: ${(p) => (p.$i === 11 ? 18 : 20)}px;
  display: flex;
  align-items: center;
  overflow: hidden;
  background: ${(p) => (p.$sel ? "linear-gradient(90deg, #7b848b 120px, transparent 120px)" : p.$i % 2 ? "#727272" : "#6b6b6b")};
`;

const RowMain = styled.div<{ $indent: number; $white?: boolean }>`
  width: 120px;
  height: 20px;
  padding-top: 2px;
  padding-left: ${(p) => p.$indent}px;
  display: flex;
  align-items: center;
  overflow: hidden;
  white-space: nowrap;
  border-right: 1px solid #5c5c5c;
  color: ${(p) => (p.$white ? "#fff" : "#000")};
  svg {
    margin-top: -2px;
  }
`;

const RowFlag = styled.div`
  flex: none;
  width: 20px;
  height: 20px;
  padding-left: 2px;
  display: flex;
  align-items: center;
  justify-content: center;
  border-right: 1px solid #5c5c5c;
`;

const Halo = styled.span<{ $c?: string; $ml?: number }>`
  flex: none;
  width: 18px;
  height: 18px;
  margin-top: -2px;
  margin-left: ${(p) => p.$ml ?? 0}px;
  border-radius: 9px;
  display: flex;
  align-items: center;
  justify-content: center;
  background: ${(p) => p.$c ?? "transparent"};
  svg {
    margin-top: 0;
  }
`;

const Sep = styled.span<{ $ml: number }>`
  width: 2px;
  height: 12px;
  margin: -2px 8px 0 ${(p) => p.$ml}px;
  flex: none;
  background: #4a4a4a;
`;

const Toggle = ({ minus }: { minus?: boolean }) => (
  <svg width="20" height="10" viewBox="0 0 20 10" style={{ flex: "none" }}>
    <path d="M9 5h11" stroke="#444" />
    <circle cx="5" cy="5" r="3.800" fill="#f0f0f0" stroke="#111" strokeWidth="1.100" />
    <path d={minus ? "M2.800 5h4.400" : "M2.800 5h4.400M5 2.800v4.400"} stroke="#111" strokeWidth="1" />
  </svg>
);

const Flags = ({ on }: { on?: boolean }) => (
  <>
    <RowFlag>{on && <Icon n="eye" />}</RowFlag>
    <RowFlag>{on && <Icon n="cursor" />}</RowFlag>
    <RowFlag>{on && <Icon n="camera" s={14} />}</RowFlag>
  </>
);

const HScroll = styled.div`
  margin: auto 4px 4px 3px;
  height: 14px;
  border-radius: 7px;
  border: 1px solid #4c4c4c;
  background: linear-gradient(#545454, #636363);
  &::before {
    content: "";
    display: block;
    width: 102px;
    height: 12px;
    border-radius: 6px;
    border-right: 1px solid #454545;
    background: linear-gradient(#939393, #7c7c7c);
  }
`;

const TreeLine = styled.span`
  position: absolute;
  left: 29px;
  top: 20px;
  width: 1px;
  height: 92px;
  background: #4a4a4a;
`;

const OutlinerPanel = () => (
  <>
    <Bar>
      <EditorButton n="tree" />
      <Gap $w={12} />
      <MenuItem $w={45}>View</MenuItem>
      <MenuItem $w={47}>Search</MenuItem>
      <Group $w={60}><Cell $tone="dark" $pl={7}>All Sc</Cell></Group>
      <Grip $x={168} $y={1} $top />
    </Bar>
    <Outliner>
      <TreeLine />
      <Row $i={0} $sel>
        <RowMain $indent={4}><Toggle minus /><Halo $c="#a8b0b8" $ml={-2}><Icon n="scene" s={15} /></Halo><Gap $w={2} />Scene</RowMain><Flags />
      </Row>
      <Row $i={1}>
        <RowMain $indent={24}><Toggle /><Icon n="layers" ml={-2} /><Gap $w={4} />RenderLaye</RowMain><Flags />
      </Row>
      <Row $i={2}>
        <RowMain $indent={41}><Halo $c="#8d97b0"><Icon n="world" /></Halo><Gap $w={3} />World</RowMain><Flags />
      </Row>
      <Row $i={3}>
        <RowMain $indent={24}><Toggle /><Icon n="movie" ml={-2} /><Gap $w={4} />Camera<Sep $ml={9} /></RowMain><Flags on />
      </Row>
      <Row $i={4}>
        <RowMain $indent={24} $white><Toggle /><Halo $c="#a87844" $ml={-3}><Icon n="mesh" /></Halo><Gap $w={3} />Cube<Sep $ml={9} /><Icon n="meshData" ml={3} /></RowMain><Flags on />
      </Row>
      <Row $i={5}>
        <RowMain $indent={24}><Toggle /><Icon n="lamp" ml={-2} /><Gap $w={4} />Lamp<Sep $ml={9} /><Icon n="lampData" ml={1} /></RowMain><Flags on />
      </Row>
      {[6, 7, 8, 9, 10, 11].map((i) => (
        <Row key={i} $i={i}><RowMain $indent={0} /><Flags /></Row>
      ))}
      <HScroll />
    </Outliner>
  </>
);

/* ---------- properties ---------- */

const PropBar = styled(Bar)`
  margin-top: 1px;
`;

const PropBody = styled.div`
  flex: 1;
  min-height: 0;
  display: flex;
  overflow: hidden;
  background: #727272;
  border-top: 1px solid #8a8a8a;
`;

const PropMain = styled.div`
  width: 159px;
  padding-left: 4px;
  padding-right: 1px;
`;

const Line = styled.div<{ $mt?: number; $pl?: number; $h?: number }>`
  display: flex;
  align-items: center;
  margin-top: ${(p) => p.$mt ?? 0}px;
  height: ${(p) => (p.$h ? `${p.$h}px` : "auto")};
  padding-left: ${(p) => p.$pl ?? 3}px;
  white-space: nowrap;
`;

const Lowered = styled.span<{ $w?: number }>`
  flex: none;
  width: ${(p) => (p.$w ? `${p.$w}px` : "auto")};
  padding-top: 2px;
`;

const Columns = styled.div<{ $mt?: number }>`
  display: flex;
  gap: 8px;
  margin-top: ${(p) => p.$mt ?? 0}px;
  padding-left: 3px;
`;

const Column = styled.div`
  width: 70px;
  display: flex;
  flex-direction: column;
`;

const NumCell = styled(Cell)<{ $fill?: boolean }>`
  ${(p) => p.$fill && css`background: linear-gradient(90deg, #7d7d7d 37px, #a9a9a9 37px);`}
`;

const Num = ({ t, first, fill }: { t: string; first?: boolean; fill?: boolean }) => (
  <NumCell $tone="pill" $top $h={first ? 18 : 20} $pl={5} $fill={fill}>
    {!fill && <Arrow />}
    <NumberText $mr={fill ? 14 : 5}>{t}</NumberText>
    {!fill && <><Arrow flip /><Gap $w={5} /></>}
  </NumCell>
);

const Check = styled.span<{ $dim?: boolean; $ml?: number }>`
  flex: none;
  width: 14px;
  height: 14px;
  margin-left: ${(p) => p.$ml ?? 0}px;
  border: 1px solid #303030;
  border-radius: 4px;
  background: linear-gradient(#454545, #565656);
  opacity: ${(p) => (p.$dim ? 0.4 : 1)};
`;

const Tight = styled.span`
  margin-left: -2px;
`;

const PropertiesPanel = () => (
  <>
    <PropBar>
      <EditorButton n="props" />
      <Group $w={150} $ml={8}>
        <Cell $tone="blue" $w={18} $center><Icon n="camera" /></Cell>
        {["layers", "scene", "world", "cube", "link", "wrench"].map((n) => (
          <Cell key={n} $tone="tab" $w={20} $center><Icon n={n} /></Cell>
        ))}
      </Group>
      <Grip $x={168} $y={1} $top />
    </PropBar>
    <PropBody>
      <PropMain>
        <Line $h={34} $pl={5}><Icon n="pin" /><Icon n="scene" ml={5} /><Gap $w={4} /><Lowered>Scene</Lowered></Line>
        <Rule $mt={0} />
        <PanelTitle $h={24}><Triangle />Render<Dots /></PanelTitle>
        <Line $mt={7}>
          <Group $w={148}>
            <Cell $tone="light" $w={48} $pl={2}><Icon n="cameraNew" /><Tight>Rende</Tight></Cell>
            <Cell $tone="light" $w={49} $pl={2}><Icon n="clap" /><Tight>Anima</Tight></Cell>
            <Cell $tone="light" $pl={2}><Icon n="speaker" /><Tight>Audio</Tight></Cell>
          </Group>
        </Line>
        <Line $mt={5} $pl={10}>
          <Lowered $w={47}>Display:</Lowered>
          <Group $w={94}>
            <Cell $tone="dark" $w={72} $pl={7}>Image Ed<Updown /></Cell>
            <Cell $tone="light" $center><Icon n="unlock" /></Cell>
          </Group>
        </Line>
        <Rule $mt={7} />
        <PanelTitle $h={24}><Triangle />Dimensions<Dots /></PanelTitle>
        <Line $mt={7}>
          <Group $w={148}>
            <Cell $tone="dark" $w={106} $pl={6}>Render Presets<Updown /></Cell>
            <Cell $tone="light" $w={20} $center><Icon n="plus" s={15} /></Cell>
            <Cell $tone="light" $center><Icon n="minus" s={15} /></Cell>
          </Group>
        </Line>
        <Columns $mt={9}>
          <Column>
            <Caption $w={70}>Resolution:</Caption>
            <Stack $pl={0} $mt={1}>
              <Group $w={70} $col $r={10}><Num first t="1920 p" /><Num t="1080 p" /><Num fill t="50%" /></Group>
            </Stack>
            <Caption $w={76} $mt={4}>Aspect Rat...</Caption>
            <Stack $pl={0} $mt={1}>
              <Group $w={70} $col $r={10}><Num first t=": 1.000" /><Num t=": 1.000" /></Group>
            </Stack>
            <Line $mt={5} $pl={3}><Check /><Check $dim $ml={25} /></Line>
          </Column>
          <Column>
            <Caption $w={70}>Frame Ran</Caption>
            <Stack $pl={0} $mt={1}>
              <Group $w={70} $col $r={10}><Num first t="Start :1" /><Num t="En: 250" /><Num t="Fram: 1" /></Group>
            </Stack>
            <Caption $w={74} $mt={4}>Frame Rate:</Caption>
            <Stack $pl={0} $mt={1}>
              <Group $w={70}><Cell $tone="dark" $pl={7}>24 fps<Updown /></Cell></Group>
            </Stack>
            <Caption $w={74} $mt={4}>Time Rem...</Caption>
            <Stack $pl={0} $mt={1}>
              <Group $w={70} $r={10}>
                <Cell $tone="pill" $w={34} $pl={5}><Arrow /><Push><Arrow flip /><Gap $w={5} /></Push></Cell>
                <Cell $tone="pill" $pl={5}><Arrow /><NumberText $mr={6}>1</NumberText><Arrow flip /><Gap $w={5} /></Cell>
              </Group>
            </Stack>
          </Column>
        </Columns>
        <Rule $mt={9} />
        <PanelTitle $h={23}>
          <Triangle />
          <Svg width="14" height="14" viewBox="0 0 14 14">
            <rect x=".5" y=".5" width="13" height="13" rx="3.500" fill="#4a4a4a" stroke="#2c2c2c" />
            <path d="M3 6.500L6 10L12 2.500" fill="none" stroke="#eee" strokeWidth="2" />
          </Svg>
          Anti-Aliasing
          <Dots />
        </PanelTitle>
      </PropMain>
      <Stack $mt={4} $pl={4}><VScroll $h={357} $thumb={168} /></Stack>
    </PropBody>
  </>
);

/* ---------- annotations ---------- */

const Overlay = styled.svg`
  position: absolute;
  inset: 0;
  z-index: 5;
  pointer-events: none;
`;

const Note = styled.span<{ $x: number; $y: number; $s: number; $ls: number; $green?: boolean }>`
  position: absolute;
  z-index: 4;
  left: ${(p) => p.$x}px;
  top: ${(p) => p.$y - 30}px;
  line-height: 40px;
  font-family: Lato, sans-serif;
  font-weight: 600;
  font-size: ${(p) => p.$s}px;
  letter-spacing: ${(p) => p.$ls}px;
  white-space: nowrap;
  color: ${(p) => (p.$green ? "#00ff00" : "#ff00ff")};
  -webkit-text-stroke: 0.5px ${(p) => (p.$green ? "#00ff00" : "#ff00ff")};
`;

const Annotations = () => (
  <>
    <Overlay width="1366" height="705" viewBox="0 0 1366 705" fill="none">
      <g stroke="#ffff00" strokeWidth="2">
        <path d="M261.700 99.500C264 150 240 195 140 185" />
        <path d="M787 68.500C783 82 785 91 800 93" />
        <path d="M1008.700 145C1012 242 1062 272 1208 193" />
        <path d="M1018 397C1008 470 1058 530 1179 501" />
        <path d="M1033 596.700C1088 606 1172 648 1124 680" />
        <path d="M614 236C606 252 611 272 637 285.500" />
        <path d="M417 324C395 318 387 305 396 293" />
      </g>
      <ellipse cx="194.500" cy="627.500" rx="160" ry="39" stroke="#ffff00" strokeWidth="5" />
      <g fill="#ffff00">
        <path d="M124 181L147.500 180L140 185L143.500 192Z" />
        <path d="M813.500 94.500L795.500 90.500L801 94.500L796.500 101Z" />
        <path d="M1222 184.500L1212 197.500L1209 192L1204.500 189.500Z" />
        <path d="M1192 495.500L1178 507L1179.500 501L1174 496.500Z" />
        <path d="M401 285.500L387.500 294L394.500 294.500L398 299.500Z" />
      </g>
      <g fill="#000">
        <path d="M1114 685L1125 675.500L1124 681L1130 684.500Z" />
        <path d="M648 289L634 279L635.500 285L629 288.500Z" />
      </g>
    </Overlay>
    <Note $x={190} $y={93} $s={27} $ls={0.15}>Ferramentas</Note>
    <Note $x={888} $y={90} $s={27} $ls={0.27}>Layers de trabalho</Note>
    <Note $x={847} $y={125} $s={27} $ls={0.28}>(objetos, câmera, luz, etc)</Note>
    <Note $x={885} $y={376} $s={27} $ls={0.28}>Propriedades do objeto</Note>
    <Note $x={158} $y={583} $s={24} $ls={0.24}>Menu de ações (visão, adicionar obj, selecionar, duplicar ...)</Note>
    <Note $x={879} $y={582} $s={27} $ls={0.15}>Menu de animação</Note>
    <Note $x={775} $y={65} $s={21} $ls={0} $green>Luz</Note>
    <Note $x={587} $y={228} $s={21} $ls={-0.1} $green>Objeto</Note>
    <Note $x={380} $y={351} $s={21} $ls={0} $green>Câmera</Note>
  </>
);

/* ---------- app ---------- */

const DataBlock = ({ n, t, ml }: { n: string; t: string; ml: number }) => (
  <Group $w={192} $ml={ml}>
    <Cell $tone="dark" $w={30} $pl={3}><Icon n={n} /><Updown /></Cell>
    <Cell $tone="field" $w={120} $pl={7}>{t}</Cell>
    <Cell $tone="light" $w={20} $center><Icon n="plus" s={15} /></Cell>
    <Cell $tone="light" $center><Icon n="cross" s={14} /></Cell>
  </Group>
);

const Logo = styled.span`
  padding: 2px 0 0 18px;
`;

export default function App() {
  return (
    <Window>
      <GlobalStyle />
      <Bar $top={4}>
        <EditorButton n="info" />
        <Gap $w={12} />
        <MenuItem $w={38}>File</MenuItem>
        <MenuItem $w={55}>Render</MenuItem>
        <MenuItem $w={60}>Window</MenuItem>
        <MenuItem $w={36}>Help</MenuItem>
        <DataBlock n="layout" t="Default" ml={0} />
        <DataBlock n="scene" t="Scene" ml={5} />
        <Group $w={111} $ml={16}>
          <Cell $tone="dark" $pl={7}>Blender Render<Updown /></Cell>
        </Group>
        <Logo><Icon n="blender" /></Logo>
        <Status>v2.79 | Verts:8 | Faces:6 | Tris:12 | Objects:1/3 | Lamps:0/1 | Mem:8.15M | Cube</Status>
        <Grip $x={0} $y={14} />
        <Grip $x={1354} $y={1} $top />
      </Bar>
      <Body>
        <MainColumn>
          <Stage>
            <ToolShelf />
            <Viewport>
              <Scene3D />
              <ViewLabel $x={19} $y={11}>User Persp</ViewLabel>
              <ViewLabel $x={69} $y={566}>(1) Cube</ViewLabel>
              <RegionToggle>
                <svg width="7" height="7" viewBox="0 0 7 7"><path d="M3.500 0v7M0 3.500h7" stroke="#b0b0b0" strokeWidth="2" /></svg>
              </RegionToggle>
              <Grip $x={1012} $y={1} $top />
            </Viewport>
          </Stage>
          <ViewHeader />
          <TimelineArea />
          <TimelineHeader />
        </MainColumn>
        <SideColumn>
          <OutlinerPanel />
          <PropertiesPanel />
        </SideColumn>
      </Body>
      <Grip $x={0} $y={627} />
      <Grip $x={0} $y={693} />
      <Grip $x={1185} $y={300} />
      <Grip $x={1185} $y={693} />
      <Annotations />
    </Window>
  );
}
